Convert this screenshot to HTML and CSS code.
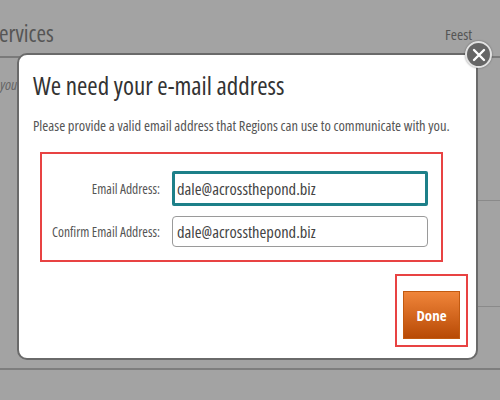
FILE: index.html
```html
<!DOCTYPE html>
<html lang="en">
<head>
    <meta charset="UTF-8">
    <title>E-mail address</title>
    <link rel="stylesheet" href="styles.css">
</head>
<body>
    <div class="page">
        <div class="page-head">
            <span class="page-title">ervices</span>
            <span class="page-link">Feest</span>
        </div>
        <div class="page-body">
            <p class="page-text">you</p>
            <div class="side-rows">
                <div class="side-row r1"></div>
                <div class="side-row r2"></div>
            </div>
        </div>
        <div class="page-foot"></div>
    </div>

    <div class="modal">
        <h1 class="modal-title">We need your e-mail address</h1>
        <p class="modal-text">Please provide a valid email address that Regions can use to communicate with you.</p>

        <div class="mark fields">
            <label class="field-label" for="email">Email Address:</label>
            <input class="field-input focus" id="email" type="text" value="dale@acrossthepond.biz">
            <label class="field-label" for="confirm">Confirm Email Address:</label>
            <input class="field-input" id="confirm" type="text" value="dale@acrossthepond.biz">
        </div>

        <div class="actions">
            <div class="mark done-mark">
                <button class="done">Done</button>
            </div>
        </div>

        <span class="close">
            <svg width="14" height="14" viewBox="0 0 14 14">
                <path d="M2 2L12 12M12 2L2 12" stroke="#fff" stroke-width="2.4" stroke-linecap="round"/>
            </svg>
        </span>
    </div>
</body>
</html>
```

FILE: styles.css
```css
*{
    margin: 0;
    padding: 0;
    box-sizing: border-box;
}
body{
    width: 500px;
    height: 400px;
    overflow: hidden;
    background: #a3a3a3;
    font-family: "Open Sans", "Liberation Sans", sans-serif;
    font-stretch: 75%;
    position: relative;
}
.page-head{
    height: 58px;
    display: flex;
    justify-content: space-between;
    align-items: center;
    border-bottom: 2px solid #7a7a7a;
}
.page-title{
    font-size: 23px;
    color: #555;
    margin-left: -1px;
    margin-top: 10px;
}
.page-link{
    font-size: 15px;
    color: #555;
    margin-right: 28px;
    margin-top: 12px;
}
.page-body{
    height: 310px;
    display: flex;
    justify-content: space-between;
}
.page-text{
    font-size: 15px;
    font-style: italic;
    color: #666;
    margin-top: 16px;
}
.side-rows{
    width: 22px;
    padding-top: 142px;
}
.side-row{
    border-bottom: 1px solid #8a8a8a;
}
.r2{
    margin-top: 105px;
}
.page-foot{
    border-top: 2px solid #7e7e7e;
}

.modal{
    position: absolute;
    left: 17px;
    top: 53px;
    width: 461px;
    height: 307px;
    background: #fff;
    border: 2px solid #6a6a6a;
    border-radius: 10px;
    padding: 14px 0 0 14px;
}
.modal-title{
    font-size: 25px;
    font-weight: 400;
    color: #333;
    line-height: 32px;
}
.modal-text{
    font-size: 14.5px;
    color: #555;
    margin-top: 16px;
    line-height: 18px;
}
.mark{
    border: 2px solid #e84343;
}
.fields{
    width: 403px;
    margin: 17px 0 0 7px;
    padding: 17px 13px 13px 0;
    display: grid;
    grid-template-columns: 118px 256px;
    column-gap: 12px;
    row-gap: 10px;
    align-items: center;
}
.field-label{
    text-align: right;
    font-size: 13.5px;
    color: #555;
}
.field-input{
    height: 31px;
    border: 1px solid #9a9a9a;
    border-radius: 4px;
    padding: 0 4px;
    font-family: inherit;
    font-stretch: 75%;
    font-size: 16.5px;
    color: #444;
    outline: none;
}
.field-input.focus{
    height: 35px;
    border: 3px solid #1d8089;
    border-radius: 2px;
    padding: 0 2px;
}
.actions{
    display: flex;
    justify-content: flex-end;
    padding-right: 8px;
    margin-top: 12px;
}
.done-mark{
    width: 73px;
    height: 73px;
    padding: 15px 6px 6px 6px;
}
.done{
    width: 57px;
    height: 48px;
    border: 1px solid #c25a10;
    background: linear-gradient(#f0853a, #b84a05);
    color: #fff;
    font-family: inherit;
    font-stretch: 75%;
    font-weight: 700;
    font-size: 15px;
}
.close{
    position: absolute;
    right: -16px;
    top: -14px;
    width: 27px;
    height: 27px;
    border-radius: 50%;
    background: #666;
    border: 2px solid #e2e2e2;
    display: flex;
    align-items: center;
    justify-content: center;
    box-shadow: 0 0 2px rgba(0, 0, 0, 0.4);
}
```
